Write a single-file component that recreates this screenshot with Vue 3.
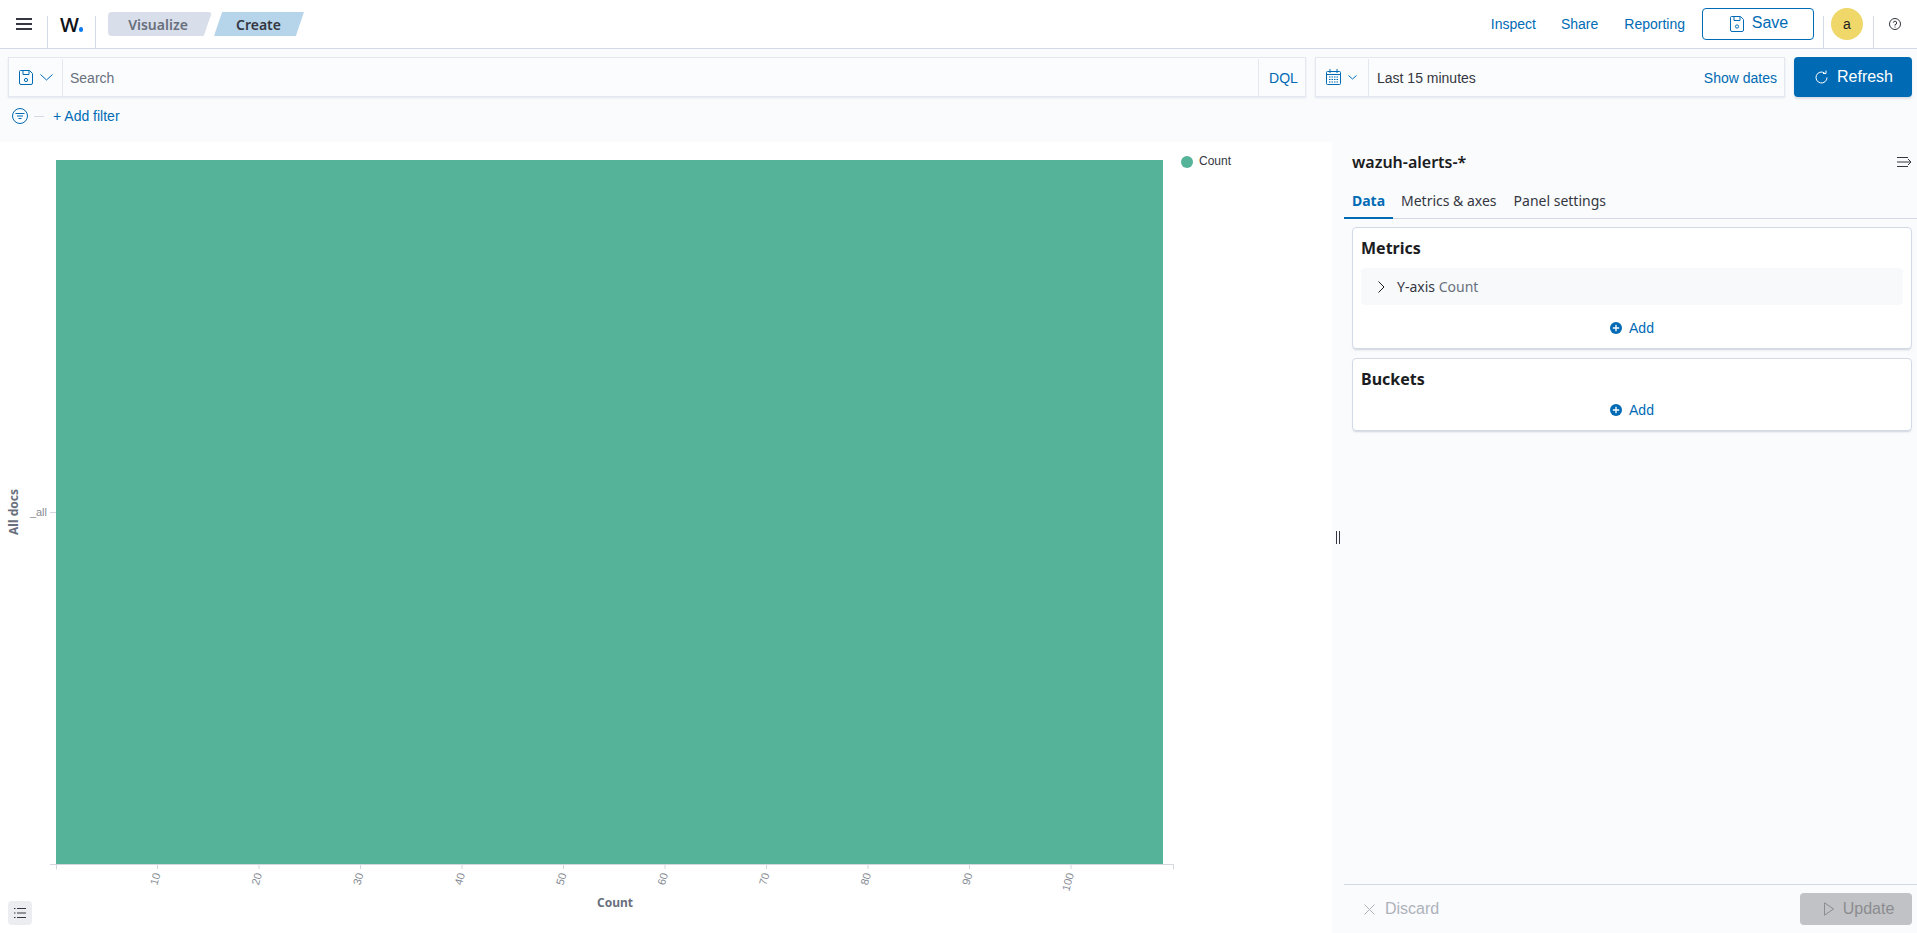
<script setup>
const xTicks = [10, 20, 30, 40, 50, 60, 70, 80, 90, 100].map((value, i) => ({
  value,
  x: 157.5 + i * 101.5
}))
</script>

<template>
  <div class="page">
    <header class="topbar">
      <button class="menu" aria-label="menu">
        <svg width="16" height="12" viewBox="0 0 16 12"><path d="M0 1h16M0 6h16M0 11h16" stroke="#343741" stroke-width="1.8" fill="none" /></svg>
      </button>
      <div class="logo"><span class="logo-w">W</span><span class="logo-dot"></span></div>
      <nav class="crumbs">
        <span class="crumb first">Visualize</span>
        <span class="crumb last">Create</span>
      </nav>
      <div class="top-actions">
        <a class="link">Inspect</a>
        <a class="link">Share</a>
        <a class="link">Reporting</a>
        <button class="save">
          <svg width="14" height="16" viewBox="0 0 14 16" fill="none" stroke="#006bb4" stroke-width="1"><path d="M.5 1.5a1 1 0 0 1 1-1h9l3 3v10.500a1.500 1.500 0 0 1-1.500 1.500h-10a1.500 1.500 0 0 1-1.500-1.500z" /><path d="M4 .5v4h6v-4" /><circle cx="7" cy="10.500" r="1.600" /></svg>
          <span>Save</span>
        </button>
      </div>
      <div class="avatar-cell"><span class="avatar">a</span></div>
      <div class="help-cell">
        <svg width="12" height="12" viewBox="0 0 12 12" fill="none" stroke="#343741"><circle cx="6" cy="6" r="5.500" /><path d="M4.300 4.700A1.700 1.700 0 1 1 6 6.600v1" /><path d="M6 8.500v1" /></svg>
      </div>
    </header>

    <section class="querybar">
      <div class="field search">
        <div class="prepend save-query">
          <svg width="14" height="15" viewBox="0 0 14 15" fill="none" stroke="#006bb4"><path d="M.5 1.500a1 1 0 0 1 1-1h9l3 3v9.500a1.500 1.500 0 0 1-1.500 1.500h-10a1.500 1.500 0 0 1-1.500-1.500z" /><path d="M4 .5v4h6v-4" /><circle cx="7" cy="10" r="1.600" /></svg>
          <svg width="13" height="7" viewBox="0 0 13 7" fill="none" stroke="#006bb4"><path d="M.5.500l6 5.500 6-5.500" /></svg>
        </div>
        <span class="placeholder">Search</span>
        <span class="dql">DQL</span>
      </div>
      <div class="field dates">
        <div class="prepend cal">
          <svg width="15" height="16" viewBox="0 0 15 16" fill="none" stroke="#006bb4"><rect x=".5" y="2.500" width="14" height="13" rx="1" /><path d="M4 0v4M11 0v4M.5 5.500h14" /><path d="M3 8h9M3 10.500h9M3 13h9" stroke-dasharray="1.500 1" /></svg>
          <svg width="9" height="5" viewBox="0 0 9 5" fill="none" stroke="#006bb4"><path d="M.5.500l4 3.500 4-3.500" /></svg>
        </div>
        <span class="range">Last 15 minutes</span>
        <span class="show-dates">Show dates</span>
      </div>
      <button class="refresh">
        <svg width="14" height="14" viewBox="0 0 14 14" fill="none" stroke="#fff"><path d="M9.500 2.900A5.500 5.500 0 1 0 12 7.500" /><path d="M11 .5v3H8" /></svg>
        <span>Refresh</span>
      </button>
    </section>

    <section class="filters">
      <svg width="16" height="16" viewBox="0 0 16 16" fill="none" stroke="#006bb4"><circle cx="8" cy="8" r="7.500" /><path d="M3.500 5.500h9M5 8h6M6.500 10.500h3" /></svg>
      <span class="dash"></span>
      <a class="add-filter">+ Add filter</a>
    </section>

    <main class="workspace">
      <div class="chart">
        <svg class="plot" width="1332" height="791" viewBox="0 0 1332 791">
          <rect x="56" y="18" width="1107" height="704" fill="#54b399" />
          <path d="M50 722.500h1123.500M56.500 722.500v5M1173.500 722.500v5M50 370.500h6" stroke="#d3d6dc" fill="none" />
          <g v-for="t in xTicks" :key="t.value">
            <path :d="`M${t.x} 722v5`" stroke="#d3d6dc" />
            <text class="tick" text-anchor="end" :transform="`translate(${t.x + 3} 732) rotate(-75)`">{{ t.value }}</text>
          </g>
          <text class="tick" x="47" y="374" text-anchor="end">_all</text>
          <text class="axis-title" text-anchor="middle" transform="translate(18 370) rotate(-90)">All docs</text>
          <text class="axis-title" x="615" y="765" text-anchor="middle">Count</text>
          <circle cx="1187" cy="20" r="6" fill="#54b399" />
          <text class="legend" x="1199" y="23">Count</text>
        </svg>
        <button class="legend-toggle" aria-label="legend">
          <svg width="12" height="10" viewBox="0 0 12 10" stroke="#343741"><path d="M3 .5h9M3 5h9M3 9.500h9M0 .5h1.500M0 5h1.500M0 9.500h1.500" /></svg>
        </button>
      </div>

      <aside class="panel">
        <span class="grip"></span>
        <div class="panel-head">
          <h2>wazuh-alerts-*</h2>
          <svg width="15" height="10" viewBox="0 0 15 10" fill="none" stroke="#343741"><path d="M0 .5h11M0 5h14M0 9.500h11M11 2l3 3-3 3" /></svg>
        </div>
        <div class="tabs">
          <span class="tab active">Data</span>
          <span class="tab">Metrics &amp; axes</span>
          <span class="tab">Panel settings</span>
        </div>
        <div class="cards">
          <div class="card">
            <h3>Metrics</h3>
            <div class="agg">
              <svg width="7" height="12" viewBox="0 0 7 12" fill="none" stroke="#1a1c21"><path d="M.5.500l5.500 5.500-5.500 5.500" /></svg>
              <span>Y-axis <em>Count</em></span>
            </div>
            <div class="add add-metrics">
              <svg width="12" height="12" viewBox="0 0 12 12"><circle cx="6" cy="6" r="6" fill="#006bb4" /><path d="M6 2.800v6.400M2.800 6h6.400" stroke="#fff" stroke-width="1.300" /></svg>
              <span>Add</span>
            </div>
          </div>
          <div class="card buckets">
            <h3>Buckets</h3>
            <div class="add">
              <svg width="12" height="12" viewBox="0 0 12 12"><circle cx="6" cy="6" r="6" fill="#006bb4" /><path d="M6 2.800v6.400M2.800 6h6.400" stroke="#fff" stroke-width="1.300" /></svg>
              <span>Add</span>
            </div>
          </div>
        </div>
        <footer class="panel-foot">
          <span class="discard">
            <svg width="11" height="11" viewBox="0 0 11 11" fill="none" stroke="#aeb2bb"><path d="M.5.500l10 10M10.500.500l-10 10" /></svg>
            <span>Discard</span>
          </span>
          <button class="update">
            <svg width="10" height="14" viewBox="0 0 10 14" fill="none" stroke="#8b8c8f"><path d="M.5.800v12.400l9-6.200z" /></svg>
            <span>Update</span>
          </button>
        </footer>
      </aside>
    </main>
  </div>
</template>

<style>
html, body { margin: 0; background: #fafbfd; }
</style>

<style scoped>
.page {
  width: 1917px;
  height: 933px;
  overflow: hidden;
  display: flex;
  flex-direction: column;
  background: #fafbfd;
  font-family: "Liberation Sans", Arial, sans-serif;
  font-size: 14px;
  color: #343741;
}
button { font-family: inherit; margin: 0; padding: 0; cursor: pointer; }

.topbar {
  height: 49px;
  box-sizing: border-box;
  flex: none;
  display: flex;
  align-items: stretch;
  background: #fff;
  border-bottom: 1px solid #d3dae6;
}
.menu {
  width: 48px;
  border: 0;
  background: none;
  border-right: 1px solid #d3dae6;
  margin-top: 16px;
  display: flex;
  align-items: flex-start;
  justify-content: center;
  padding-top: 2px;
}
.logo {
  width: 48px;
  margin-top: 16px;
  border-right: 1px solid #d3dae6;
  box-sizing: border-box;
  display: flex;
  align-items: flex-start;
  padding-left: 12px;
}
.logo-w {
  font: 600 20px/1 "Open Sans", sans-serif;
  color: #0f1218;
  margin-top: -1px;
}
.logo-dot {
  width: 4.500px;
  height: 4.500px;
  border-radius: 50%;
  background: #0a7cf0;
  margin: 11px 0 0 0;
}
.crumbs {
  display: flex;
  align-items: center;
  margin-left: 12px;
  gap: 2px;
}
.crumb {
  height: 24px;
  display: flex;
  align-items: center;
  justify-content: center;
  font: 600 14px/1 "Noto Sans", sans-serif;
}
.crumb.first {
  width: 104px;
  background: #d8deea;
  color: #69707d;
  border-radius: 4px;
  padding: 1px 4px 0 0;
  box-sizing: border-box;
  clip-path: polygon(0 0, 100% 0, 92% 100%, 0 100%);
}
.crumb.last {
  width: 90px;
  background: #b7d5ea;
  color: #343741;
  padding: 1px 1px 0 0;
  box-sizing: border-box;
  clip-path: polygon(9% 0, 100% 0, 91% 100%, 0 100%);
}
.top-actions {
  margin-left: auto;
  display: flex;
  align-items: center;
  height: 48px;
  color: #006bb4;
}
.link { color: #006bb4; margin-right: 26px; }
.link:first-child { margin-right: 25px; }
.link:nth-child(3) { margin-right: 17px; }
.save {
  width: 112px;
  height: 32px;
  border: 1px solid #006bb4;
  border-radius: 4px;
  background: #fff;
  color: #006bb4;
  font-size: 16px;
  display: flex;
  align-items: center;
  justify-content: center;
  gap: 8px;
  padding-left: 2px;
}
.save span { margin-top: -2px; }
.avatar-cell {
  width: 51px;
  margin: 16px 0 0 9px;
  padding-right: 3px;
  box-sizing: border-box;
  border-left: 1px solid #d3dae6;
  border-right: 1px solid #d3dae6;
  display: flex;
  justify-content: center;
}
.avatar {
  width: 32px;
  height: 32px;
  flex: none;
  margin-top: -8px;
  border-radius: 50%;
  background: #efd76a;
  color: #1a1c21;
  display: flex;
  align-items: center;
  justify-content: center;
}
.help-cell {
  width: 43px;
  display: flex;
  align-items: center;
  padding-left: 15px;
  box-sizing: border-box;
}

.querybar {
  display: flex;
  padding: 8px 5px 0 8px;
  height: 48px;
  box-sizing: border-box;
  flex: none;
}
.field {
  display: flex;
  align-items: center;
  background: #fbfcfd;
  border: 1px solid #e4e8f0;
  box-shadow: 0 1px 2px rgba(152, 162, 179, .25);
  box-sizing: border-box;
  height: 40px;
  padding-top: 1px;
}
.search { width: 1298px; }
.dates { width: 470px; margin-left: 9px; }
.prepend {
  height: 100%;
  display: flex;
  align-items: center;
  box-sizing: border-box;
  border-right: 1px solid #e4e8f0;
  margin-top: -1px;
}
.save-query { width: 54px; padding-left: 10px; gap: 7px; }
.cal { width: 53px; padding-left: 10px; gap: 7px; }
.placeholder { margin-left: 7px; color: #69707d; }
.dql {
  margin-left: auto;
  height: 100%;
  width: 47px;
  box-sizing: border-box;
  padding-left: 3px;
  display: flex;
  align-items: center;
  justify-content: center;
  border-left: 1px solid #e4e8f0;
  color: #006bb4;
}
.range { margin-left: 8px; color: #343741; }
.show-dates { margin-left: auto; margin-right: 7px; color: #006bb4; }
.refresh {
  margin-left: 9px;
  width: 118px;
  height: 40px;
  border: 0;
  border-radius: 4px;
  background: #006bb4;
  color: #fff;
  font-size: 16px;
  display: flex;
  align-items: center;
  justify-content: center;
  gap: 8px;
  padding-left: 2px;
  box-shadow: 0 2px 2px rgba(152, 162, 179, .3);
}

.filters {
  flex: none;
  height: 45px;
  display: flex;
  align-items: center;
  padding: 0 0 7px 12px;
  box-sizing: border-box;
}
.dash { width: 10px; height: 1px; background: #d3dae6; margin: 0 9px 0 6px; }
.add-filter { color: #006bb4; }

.workspace { flex: 1; min-height: 0; display: flex; }
.chart { position: relative; width: 1332px; background: #fff; flex: none; }
.plot { display: block; }
.tick { font: 11px "Liberation Sans", sans-serif; fill: #868b95; }
.axis-title { font: 700 12px "Noto Sans", sans-serif; fill: #69707d; }
.legend { font: 12px "Liberation Sans", sans-serif; fill: #343741; }
.legend-toggle {
  position: absolute;
  left: 8px;
  bottom: 8px;
  width: 24px;
  height: 24px;
  border: 0;
  border-radius: 4px;
  background: #ebedf0;
  display: flex;
  align-items: center;
  justify-content: center;
}

.panel { position: relative; flex: 1; display: flex; flex-direction: column; font-family: "Noto Sans", sans-serif; }
.grip {
  position: absolute;
  left: 4px;
  top: 389px;
  width: 2px;
  height: 13px;
  border-left: 1px solid #343741;
  border-right: 1px solid #343741;
}
.panel-head {
  display: flex;
  align-items: center;
  justify-content: space-between;
  padding: 4px 5px 0 20px;
  height: 32px;
}
.panel-head h2 { margin: 0; font-size: 16px; font-weight: 600; color: #1a1c21; line-height: 24px; }
.tabs {
  margin: 7px 0 0 12px;
  height: 34px;
  display: flex;
  border-bottom: 1px solid #d3dae6;
  box-sizing: border-box;
}
.tab { padding: 0 9px 0 8px; line-height: 32px; color: #343741; height: 34px; box-sizing: border-box; white-space: nowrap; }
.tab.active {
  width: 49px;
  padding: 0;
  text-align: center;
  color: #006bb4;
  font-weight: 700;
  border-bottom: 2px solid #006bb4;
}
.cards { padding: 8px 5px 0 20px; display: flex; flex-direction: column; gap: 9px; }
.card {
  height: 122px;
  box-sizing: border-box;
  background: #fff;
  border: 1px solid #d3dae6;
  border-radius: 4px;
  box-shadow: 0 2px 2px -1px rgba(152, 162, 179, .45);
  padding: 8px;
}
.card.buckets { height: 73px; }
.card h3 { margin: 0; font-size: 16px; font-weight: 700; line-height: 24px; color: #1a1c21; }
.agg {
  margin-top: 8px;
  height: 37px;
  background: #f8f9fb;
  border-radius: 4px;
  display: flex;
  align-items: center;
  padding-left: 17px;
  gap: 12px;
  color: #343741;
}
.agg em { font-style: normal; color: #69707d; }
.add {
  display: flex;
  align-items: center;
  justify-content: center;
  gap: 7px;
  color: #006bb4;
  height: 20px;
  margin-top: 9px;
  font-family: "Liberation Sans", sans-serif;
}
.add-metrics { margin-top: 13px; }
.panel-foot {
  margin: auto 0 0 12px;
  height: 49px;
  box-sizing: border-box;
  border-top: 1px solid #d3dae6;
  display: flex;
  align-items: flex-start;
  justify-content: space-between;
  padding: 8px 5px 0 20px;
  font-family: "Liberation Sans", sans-serif;
}
.discard {
  display: flex;
  align-items: center;
  gap: 10px;
  height: 32px;
  color: #aeb2bb;
  font-size: 16px;
}
.update {
  width: 112px;
  height: 32px;
  border: 0;
  border-radius: 4px;
  background: #c1c2c5;
  color: #8b8c8f;
  font-size: 16px;
  display: flex;
  align-items: center;
  justify-content: center;
  gap: 9px;
  padding-left: 6px;
}
</style>
